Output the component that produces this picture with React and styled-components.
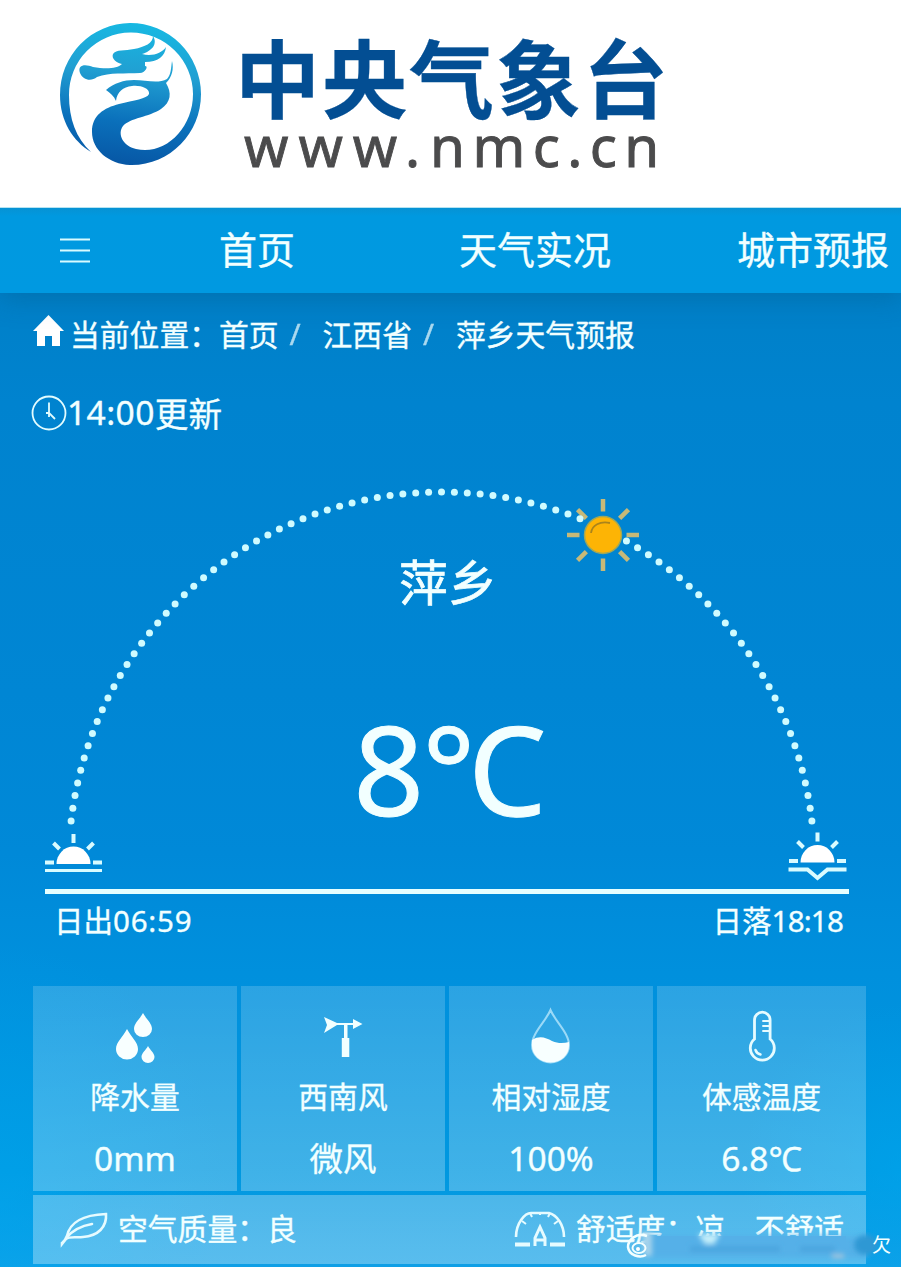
import React from "react";
import styled, { createGlobalStyle } from "styled-components";

const GlobalStyle = createGlobalStyle`
* {
  box-sizing: border-box;
}
body {
  margin: 0;
  background: #ffffff;
  overflow: hidden;
  font-family: "Noto Sans", "Noto Sans CJK SC", sans-serif;
}
`

const Page = styled.div`
width: 901px;
height: 1267px;
overflow: hidden;
display: flex;
flex-direction: column;
color: #f2ffff;
-webkit-text-stroke: 0.35px currentColor;
`

const Header = styled.header`
height: 208px;
flex: none;
display: flex;
align-items: flex-start;
padding: 20px 0 0 56px;
background: #ffffff;
border-bottom: 1px solid #b5e3f2;
position: relative;
z-index: 2;
`

const Logo = styled.svg`
width: 150px;
height: 150px;
flex: none;
`

const Brand = styled.div`
display: flex;
flex-direction: column;
padding: 12px 0 0 29px;
`

const BrandName = styled.h1`
margin: 0;
color: #034e93;
font-family: "Noto Sans CJK SC", sans-serif;
font-size: 85px;
font-weight: 700;
line-height: 86px;
letter-spacing: 2px;
white-space: nowrap;
`

const BrandUrl = styled.div`
padding: 3px 0 0 9px;
color: #4b4b4c;
font-size: 56.5px;
line-height: 50px;
letter-spacing: 7.4px;
white-space: nowrap;
-webkit-text-stroke: 0.9px currentColor;
`

const UrlHost = styled.span`
letter-spacing: 10px;
`

const Nav = styled.nav`
height: 85px;
flex: none;
display: flex;
align-items: center;
padding: 0 0 3px 59px;
background: linear-gradient(#0792d4 0, #0099e0 8px, #0099e1 100%);
position: relative;
z-index: 1;
box-shadow: 0 4px 26px rgba(0, 80, 120, 0.34);
`

const MenuIcon = styled.svg`
width: 32px;
height: 30px;
flex: none;
margin: 2px 128px 0 0;
`

const NavItem = styled.a`
flex: none;
margin-right: ${props => props.$gap || 0}px;
font-size: 38px;
line-height: 50px;
white-space: nowrap;
`

const Main = styled.main`
flex: 1;
position: relative;
display: flex;
flex-direction: column;
background:
  radial-gradient(ellipse 230px 260px at 0 910px, rgba(0, 168, 240, 0.5), transparent),
  radial-gradient(ellipse 160px 170px at 901px 880px, rgba(0, 168, 240, 0.5), transparent),
  linear-gradient(#0080c8 0, #0083cf 110px, #0086d4 400px, #0089d8 560px, #0090dd 680px, #0098e0 880px, #0f9fe6 100%);
`

const Crumbs = styled.div`
height: 44px;
margin-top: 18px;
padding-left: 33px;
display: flex;
align-items: center;
font-size: 29.8px;
white-space: nowrap;
`

const HomeIcon = styled.svg`
width: 31px;
height: 32px;
margin: -5px 6px 0 0;
`

const Slash = styled.span`
width: 44px;
padding-left: ${props => props.$pad || 11}px;
opacity: 0.7;
`

const Updated = styled.div`
height: 50px;
margin-top: 32px;
padding: 0 0 0 31px;
display: flex;
align-items: center;
font-size: 33.6px;
white-space: nowrap;
`

const Digits = styled.span`
letter-spacing: ${props => props.$space}px;
`

const ClockIcon = styled.svg`
width: 36px;
height: 36px;
margin-top: 1px;
`

const Sky = styled.section`
height: 452px;
display: grid;
`

const SkyDrawing = styled.svg`
grid-area: 1 / 1;
width: 901px;
height: 449px;
margin-top: 2px;
`

const Current = styled.div`
grid-area: 1 / 1;
display: flex;
flex-direction: column;
align-items: center;
padding: 110px 5px 0 0;
`

const City = styled.div`
font-size: 49px;
line-height: 70px;
-webkit-text-stroke: 0.7px currentColor;
`

const Temperature = styled.div`
margin-top: 71px;
padding-left: 1px;
font-size: 124px;
line-height: 160px;
letter-spacing: -2px;
-webkit-text-stroke: 1px currentColor;
`

const SunTimes = styled.div`
margin: 0 52px 0 45px;
padding: 4px 6px 0 9px;
border-top: 5px solid #e6ffff;
display: flex;
justify-content: space-between;
font-size: 29.5px;
line-height: 46px;
`

const Stats = styled.section`
margin: 42px 35px 0 33px;
display: grid;
grid-template-columns: 204px 204px 204px 209px;
grid-template-rows: 205px 69px;
gap: 4px;
`

const Stat = styled.div`
display: flex;
flex-direction: column;
align-items: center;
padding-top: 20px;
background: linear-gradient(rgba(255, 255, 255, 0.17), rgba(255, 255, 255, 0.26));
`

const StatIcon = styled.svg`
width: 60px;
height: 60px;
`

const StatLabel = styled.div`
margin-top: 9px;
font-size: 29.8px;
line-height: 44px;
`

const StatValue = styled.div`
margin-top: 15px;
font-size: 33.5px;
line-height: 48px;
`

const Summary = styled.div`
grid-column: 1 / -1;
display: flex;
align-items: flex-start;
padding: 12px 0 0 27px;
background: linear-gradient(rgba(255, 255, 255, 0.29), rgba(255, 255, 255, 0.31));
font-size: 29.8px;
line-height: 44px;
white-space: pre;
`

const SummaryItem = styled.div`
display: flex;
width: ${props => props.$width || "auto"};
`

const SummaryIcon = styled.svg`
width: 52px;
height: 46px;
margin-right: ${props => props.$gap}px;
`

const Watermark = styled.svg`
position: absolute;
right: 0;
bottom: 0;
width: 291px;
height: 57px;
text {
  font-family: "Noto Sans CJK SC", sans-serif;
}
`

// arc is a circle of radius 373 whose centre sits near the horizon line
const ARC = { cx: 441.5, cy: 426, r: 373, from: 6.77, dots: 85 };

const arcDots = Array.from({ length: ARC.dots }, (_, i) => {
  const step = (180 - ARC.from * 2) / (ARC.dots - 1);
  const angle = ((ARC.from + step * i) * Math.PI) / 180;
  return {
    x: ARC.cx + ARC.r * Math.cos(angle),
    y: ARC.cy - ARC.r * Math.sin(angle)
  };
});

const stats = [
  {
    label: "降水量",
    value: "0mm",
    icon: (
      <g fill="#f8ffff">
        <path d="M38 7C41 13 47 17 47 23a9 8 0 0 1-18 0c0-6 6-10 9-16z" />
        <path d="M22 23c4 8 11 13 11 20a11 10.500 0 0 1-22 0c0-7 7-12 11-20z" />
        <path d="M43 40c2 4 6.500 7 6.500 11a6.500 6 0 0 1-13 0c0-4 4.500-7 6.500-11z" />
      </g>
    )
  },
  {
    label: "西南风",
    value: "微风",
    icon: (
      <g fill="#f2ffff">
        <path d="M11 11l13 6h16v-4l9.500 5-9.500 5v-4h-16l-13 8 3-8z" />
        <path d="M31 19h3.500v13h1.800v19h-7.500v-19h2.200z" />
      </g>
    )
  },
  {
    label: "相对湿度",
    value: "100%",
    icon: (
      <g>
        <path d="M29.500 4C25 15 11 27 11 39a18.500 17.500 0 0 0 37 0C48 27 34 15 29.500 4z" fill="none" stroke="#c9efff" strokeOpacity=".7" strokeWidth="2" />
        <path d="M11 34c8-5 14-2 20 1 7 3 12 2 17 1v4a18.500 16.500 0 0 1-37 0z" fill="#f8ffff" />
      </g>
    )
  },
  {
    label: "体感温度",
    value: "6.8℃",
    icon: (
      <g fill="none" stroke="#e6fbff" strokeWidth="2.800" strokeLinecap="round">
        <path d="M22.500 33V14a7.800 7.800 0 0 1 15.600 0V33a12 12 0 1 1-15.600 0z" />
        <path d="M31 15h6M31 20h6M31 25h6" strokeWidth="1.900" />
        <path d="M23.500 44c1 3 3 4 5 4.500" strokeWidth="2.500" />
      </g>
    )
  }
];

const HalfSun = () => (
  <g>
    <path d="M-17 0a17 17.500 0 0 1 34 0z" fill="#ffffff" />
    <path d="M-28.500-1.500h9M28.500-1.500h-9M-20-21l6 6M20-21l-6 6M0-30v9" stroke="#d9fbff" strokeWidth="4" />
  </g>
);

const SkyScene = () => (
  <SkyDrawing viewBox="0 0 901 449">
    <g transform="translate(603 96)">
      <g stroke="#c7b978" strokeWidth="4.500">
        {[0, 45, 90, 135, 180, 225, 270, 315].map(a => (
          <path key={a} d="M0-23.500V-36" transform={`rotate(${a})`} />
        ))}
      </g>
      <circle r="18.500" fill="#fdb405" stroke="#9da75b" strokeWidth="1.500" />
      <path d="M-12-2c1-8 9-12 19-10" fill="none" stroke="#aa841c" strokeWidth="1.800" />
    </g>
    <g fill="#cffbff">
      {arcDots.map((dot, i) => (
        // the sun's disc covers these
        i > 27 && i < 31 ? null : <circle key={i} cx={dot.x} cy={dot.y} r="3.500" />
      ))}
    </g>
    <g transform="translate(73.500 425)">
      <HalfSun />
      <path d="M-28.500 6.500h57" stroke="#d9fbff" strokeWidth="3" />
    </g>
    <g transform="translate(817.500 423.500)">
      <HalfSun />
      <path d="M-29 7h19l10 8.500 10-8.500h19" fill="none" stroke="#d9fbff" strokeWidth="4" />
    </g>
  </SkyDrawing>
);

const BrandLogo = () => (
  <Logo viewBox="0 0 150 150">
    <defs>
      <linearGradient id="dragon" gradientUnits="userSpaceOnUse" x1="90" y1="5" x2="75" y2="145">
        <stop offset="0" stopColor="#17b8e2" />
        <stop offset=".35" stopColor="#219fd2" />
        <stop offset=".7" stopColor="#0a70bb" />
        <stop offset="1" stopColor="#0757a5" />
      </linearGradient>
    </defs>
    <g fill="url(#dragon)">
      <path d="M35 132C17 121 4 101 4 75A70.500 71.500 0 0 1 145 74C145 114 113 146 74 145C53 144 36 130 36 112C36 95 48 88 63 84C78 80 91 79 93 74C94 68 84 65 76 66C67 67 61 72 60 81C58 76 54 73 50 70C58 63 68 60 78 60C90 60 102 64 111 59C115 55 115 48 116 41C118 49 116 57 110 63C116 73 115 82 105 89C93 97 74 98 67 106C61 114 67 126 80 129C108 136 137 109 137 74A62 62 0 0 0 13 75C13 99 20 118 35 132z" />
      <path d="M97 16C102 24 96 31 86 34C96 37 106 33 110 27C109 36 102 42 89 42L89 46C93 46 89 53 84 53C69 54 54 52 41 57C35 62 27 60 24 53C21 44 30 44 37 47C49 49 61 49 66 44C61 43 55 39 57 34C60 29 69 31 78 29C89 27 97 23 97 16z" />
    </g>
  </Logo>
);

const App = () => {
  return (
    <>
      <GlobalStyle />
      <Page>
        <Header>
          <BrandLogo />
          <Brand>
            <BrandName>中央气象台</BrandName>
            <BrandUrl><UrlHost>www.</UrlHost>nmc.cn</BrandUrl>
          </Brand>
        </Header>

        <Nav>
          <MenuIcon viewBox="0 0 32 30">
            <path d="M1 4.500h30M1 15.500h30M1 26.500h30" stroke="#d9fbff" strokeWidth="2.200" />
          </MenuIcon>
          <NavItem $gap={164}>首页</NavItem>
          <NavItem $gap={126}>天气实况</NavItem>
          <NavItem>城市预报</NavItem>
        </Nav>

        <Main>
          <Crumbs>
            <HomeIcon viewBox="0 0 31 32">
              <path d="M15.500 0L31 16h-4v15h-8V21h-7v10H4V16H0z" fill="#ffffff" />
            </HomeIcon>
            <span>当前位置：</span>
            <span>首页</span>
            <Slash>/</Slash>
            <span>江西省</span>
            <Slash>/</Slash>
            <span>萍乡天气预报</span>
          </Crumbs>

          <Updated>
            <ClockIcon viewBox="0 0 36 36">
              <g fill="none" stroke="#e2fcff" strokeWidth="1.800">
                <circle cx="18" cy="18" r="16.500" />
                <path d="M18 7.500V18l6 6M15 18h3v4" />
              </g>
            </ClockIcon>
            <Digits $space={0.4}>14:00</Digits>
            <span>更新</span>
          </Updated>

          <Sky>
            <SkyScene />
            <Current>
              <City>萍乡</City>
              <Temperature>8℃</Temperature>
            </Current>
          </Sky>

          <SunTimes>
            <span>日出<Digits $space={0.8}>06:59</Digits></span>
            <span>日落<Digits $space={-0.8}>18:18</Digits></span>
          </SunTimes>

          <Stats>
            {stats.map(stat => (
              <Stat key={stat.label}>
                <StatIcon viewBox="0 0 60 60">{stat.icon}</StatIcon>
                <StatLabel>{stat.label}</StatLabel>
                <StatValue>{stat.value}</StatValue>
              </Stat>
            ))}
            <Summary>
              <SummaryItem $width="454px">
                <SummaryIcon $gap={6} viewBox="0 0 52 46">
                  <g fill="none" stroke="#e6fbff" strokeWidth="2.600" strokeLinecap="round">
                    <path d="M2 36c3-2 4-4 5-7C10 15 22 8 46 7C47 20 38 29 23 30C16 31 10 29 6 32L2 37z" />
                    <path d="M6 31C12 24 20 19 32 17" />
                  </g>
                </SummaryIcon>
                <span>空气质量：良</span>
              </SummaryItem>
              <SummaryItem>
                <SummaryIcon $gap={10} viewBox="0 0 52 46">
                  <g fill="none" stroke="#e6fbff" strokeWidth="2.600">
                    <path d="M2 30C2 16 11 6 17 6H35C43 8 50 18 50 30" />
                    <path d="M8 14l4 3M16 6l2 4M26 5v3M36 6l-2 4M44 14l-4 3" strokeWidth="2" />
                    <path d="M1 37.500h15M36 37.500h15" strokeWidth="4" />
                    <path d="M21 39v-8l5-11 5 11v8M21 33h10" strokeWidth="3" />
                  </g>
                </SummaryIcon>
                <span>舒适度：凉　不舒适</span>
              </SummaryItem>
            </Summary>
          </Stats>

          <Watermark viewBox="610 1210 291 57">
            <defs>
              <filter id="smear" x="-20%" y="-60%" width="140%" height="220%">
                <feGaussianBlur stdDeviation="3" />
              </filter>
              <filter id="smudge" x="-50%" y="-50%" width="200%" height="200%">
                <feGaussianBlur stdDeviation="2.500" />
              </filter>
            </defs>
            <path d="M646 1236H866V1258H646z" fill="#55b0e8" filter="url(#smear)" />
            <path d="M648 1236H846V1248H648z" fill="#55b0e8" />
            <g filter="url(#smudge)">
              <path d="M698 1234h22l-6 10h-9z" fill="#c4eefa" />
              <path d="M690 1246h90v6h-90zM800 1246h35v6h-35z" fill="#4ba6df" />
              <ellipse cx="866" cy="1245" rx="12" ry="10" fill="#2f98d4" />
              <path d="M832 1254h12v4h-12z" fill="#a9c6dc" />
              <path d="M642 1232h10v24h-8z" fill="#a5d3ec" />
            </g>
            <g fill="none" stroke="#f4ffff" strokeWidth="2.500">
              <path d="M647 1236C636 1232 628 1240 628 1247C629 1256 640 1258 646 1255" />
              <ellipse cx="639" cy="1248" rx="6.500" ry="5" strokeWidth="2" />
            </g>
            <circle cx="638" cy="1249" r="2" fill="#ffffff" />
            <text x="872" y="1252" fontSize="19" fill="#f2ffff">欠</text>
          </Watermark>
        </Main>
      </Page>
    </>
  )
};

export default App;
